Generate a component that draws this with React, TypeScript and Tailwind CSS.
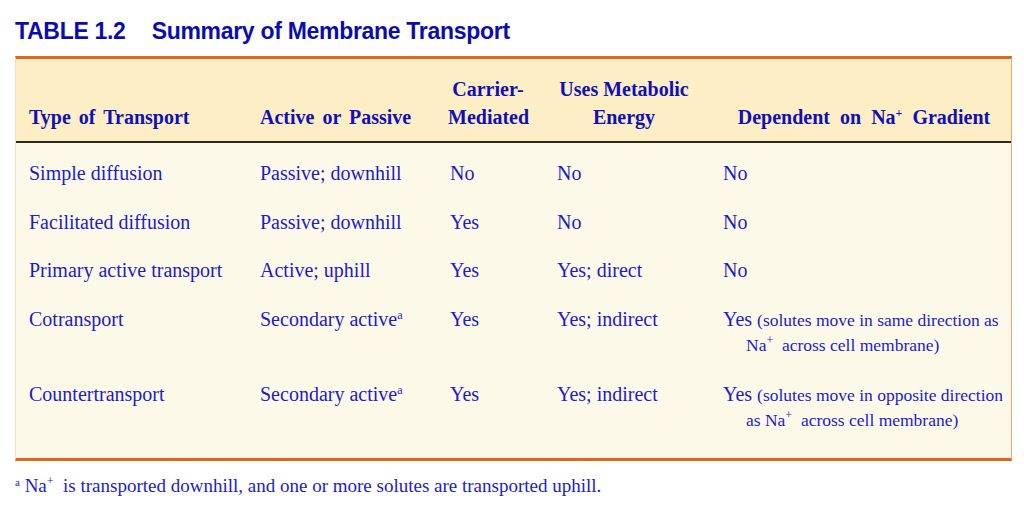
const serif = { fontFamily: '"Liberation Serif", "DejaVu Serif", serif' };

type Row = {
  type: string;
  mode: React.ReactNode;
  carrier: string;
  energy: string;
  na: React.ReactNode;
};

const Sup = ({ children }: { children: React.ReactNode }) => (
  <span className="relative -top-[7px] text-[12px] leading-none">{children}</span>
);

const rows: Row[] = [
  { type: "Simple diffusion", mode: "Passive; downhill", carrier: "No", energy: "No", na: "No" },
  { type: "Facilitated diffusion", mode: "Passive; downhill", carrier: "Yes", energy: "No", na: "No" },
  { type: "Primary active transport", mode: "Active; uphill", carrier: "Yes", energy: "Yes; direct", na: "No" },
  {
    type: "Cotransport",
    mode: (
      <>
        Secondary active<Sup>a</Sup>
      </>
    ),
    carrier: "Yes",
    energy: "Yes; indirect",
    na: (
      <>
        Yes <span className="text-[17.5px]">(solutes move in same direction as</span>
        <br />
        <span className="text-[17.5px]">
          Na<Sup>+</Sup>&nbsp; across cell membrane)
        </span>
      </>
    ),
  },
  {
    type: "Countertransport",
    mode: (
      <>
        Secondary active<Sup>a</Sup>
      </>
    ),
    carrier: "Yes",
    energy: "Yes; indirect",
    na: (
      <>
        Yes <span className="text-[17.5px]">(solutes move in opposite direction</span>
        <br />
        <span className="text-[17.5px]">
          as Na<Sup>+</Sup>&nbsp; across cell membrane)
        </span>
      </>
    ),
  },
];

const cols = "grid grid-cols-[231px_188px_109px_166px_1fr]";

export default function App() {
  return (
    <div className="w-[1024px] h-[517px] bg-white overflow-hidden pt-[16px]">
      {/* Title */}
      <h1
        className="pl-[15px] text-[23px] leading-[30px] font-bold text-[#0c0cae] tracking-[-0.3px] flex gap-[26px]"
        style={{ fontFamily: '"Liberation Sans", Arial, sans-serif' }}
      >
        <span>TABLE 1.2</span>
        <span>Summary of Membrane Transport</span>
      </h1>

      {/* Table */}
      <div
        className="mt-[10px] ml-[15px] w-[997px] border-t-[3px] border-b-[3px] border-t-[#e0661f] border-b-[#e0661f] border-r border-r-[#efa57a] border-l border-l-[#f7dcc4]"
        style={serif}
      >
        {/* Header */}
        <div
          className={`${cols} items-end bg-[#fdeec6] pl-[13px] pt-[16px] pb-[10px] text-[20px] leading-[28px] font-bold text-[#1010b4] border-b-2 border-b-[#2d2a22] [word-spacing:3px]`}
        >
          <div>Type of Transport</div>
          <div>Active or Passive</div>
          <div className="text-center w-[80px] [word-spacing:0px]">
            Carrier-
            <br />
            Mediated
          </div>
          <div className="text-center w-[134px] [word-spacing:0px]">
            Uses Metabolic
            <br />
            Energy
          </div>
          <div className="text-center pr-[6px] [word-spacing:5px]">
            Dependent on Na<Sup>+</Sup> Gradient
          </div>
        </div>

        {/* Body */}
        <div className="bg-[#fdf9e8] pl-[13px] pt-[6px] pb-[13px] text-[20px] leading-[24.5px] text-[#1c1cc8]">
          {rows.map((r) => (
            <div key={r.type} className={`${cols} py-[12px]`}>
              <div>{r.type}</div>
              <div>{r.mode}</div>
              <div className="pl-[2px]">{r.carrier}</div>
              <div>{r.energy}</div>
              <div className="pl-[23px] -indent-[23px]">{r.na}</div>
            </div>
          ))}
        </div>
      </div>

      {/* Footnote */}
      <p className="mt-[12px] pl-[15px] text-[19px] leading-[26px] text-[#1c1cc8]" style={serif}>
        <span className="relative -top-[6px] text-[11px] leading-none">a</span> Na<Sup>+</Sup>&nbsp; is transported
        downhill, and one or more solutes are transported uphill.
      </p>
    </div>
  );
}
